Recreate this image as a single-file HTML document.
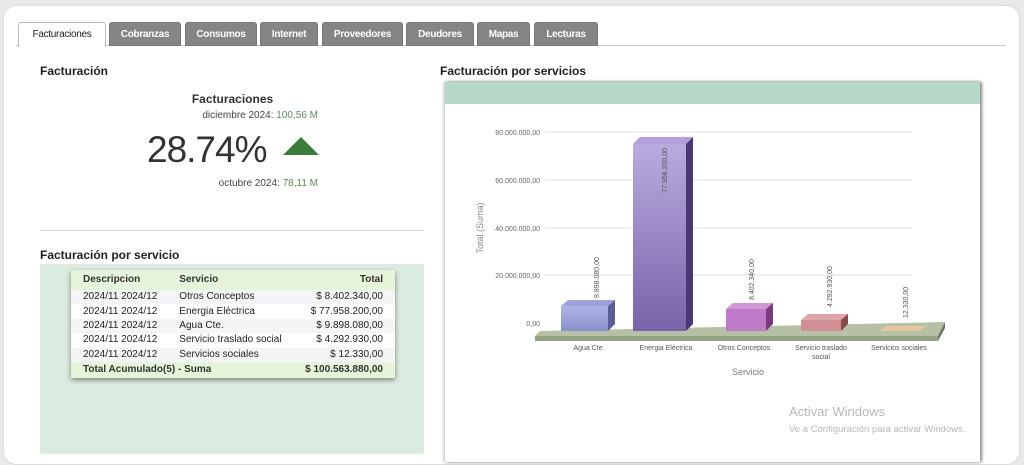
<!DOCTYPE html>
<html><head><meta charset="utf-8"><style>
*{margin:0;padding:0;box-sizing:border-box}
body{width:1024px;height:448px;background:#e9e9e9;font-family:"Liberation Sans",Arial,sans-serif;position:relative;overflow:hidden;color:#222}
.card{position:absolute;left:3px;top:5px;width:1017px;height:460px;background:#fff;border-radius:14px;border:1px solid #ddd}
.tab{position:absolute;top:22px;height:24px;background:#858585;color:#fff;font-size:10px;font-weight:bold;text-align:center;line-height:23px;border-radius:3px 3px 0 0;border:1px solid #777;letter-spacing:-0.3px}
.tab.a{background:#fff;color:#222;border:1px solid #bbb;border-bottom:none;font-weight:normal;height:25px}
.ab{position:absolute}
h3{position:absolute;font-size:12px;font-weight:bold}
table{border-collapse:collapse;font-size:10px;width:100%;white-space:nowrap}
td{height:14.4px;padding:0 0 0 12px;line-height:14px}
td.r{text-align:right;padding:0 12px 0 0}
</style></head><body>
<div class="card"></div>
<div class="ab" style="left:16px;top:45px;width:990px;height:1px;background:#c8c8c8"></div>
<div class="tab a" style="left:18px;width:88px">Facturaciones</div>
<div class="tab" style="left:109px;width:72px">Cobranzas</div>
<div class="tab" style="left:185px;width:72px">Consumos</div>
<div class="tab" style="left:260px;width:58px">Internet</div>
<div class="tab" style="left:322px;width:81px">Proveedores</div>
<div class="tab" style="left:406px;width:68px">Deudores</div>
<div class="tab" style="left:477px;width:53px">Mapas</div>
<div class="tab" style="left:534px;width:64px">Lecturas</div>

<h3 style="left:40px;top:64px">Facturación</h3>
<div class="ab" style="left:150px;top:92px;width:165px;text-align:center;font-size:12px;font-weight:bold;color:#333">Facturaciones</div>
<div class="ab" style="left:150px;top:110px;width:168px;text-align:right;font-size:10px;color:#444">diciembre 2024: <span style="color:#5a8a5a">100,56 M</span></div>
<div class="ab" style="left:147px;top:129px;font-size:37px;color:#333;letter-spacing:-1px">28.74%</div>
<div class="ab" style="left:283px;top:137px;width:0;height:0;border-left:18px solid transparent;border-right:18px solid transparent;border-bottom:18px solid #3a7d3a"></div>
<div class="ab" style="left:150px;top:178px;width:168px;text-align:right;font-size:10px;color:#444">octubre 2024: <span style="color:#5a8a5a">78,11 M</span></div>
<div class="ab" style="left:40px;top:230px;width:384px;height:1px;background:#ddd"></div>

<h3 style="left:40px;top:248px">Facturación por servicio</h3>
<div class="ab" style="left:40px;top:264px;width:384px;height:190px;background:#dcebe0"></div>
<div class="ab" style="left:71px;top:270px;width:324px;background:#fff;box-shadow:0 2px 5px rgba(0,0,0,.45)">
<table>
<tr style="background:#e6f5da;font-weight:bold;color:#333"><td style="height:20px">Descripcion</td><td>Servicio</td><td class="r">Total</td></tr>
<tr style="background:#f5f5f5"><td>2024/11 2024/12</td><td>Otros Conceptos</td><td class="r">$ 8.402.340,00</td></tr>
<tr><td>2024/11 2024/12</td><td>Energia Eléctrica</td><td class="r">$ 77.958.200,00</td></tr>
<tr style="background:#f5f5f5"><td>2024/11 2024/12</td><td>Agua Cte.</td><td class="r">$ 9.898.080,00</td></tr>
<tr><td>2024/11 2024/12</td><td>Servicio traslado social</td><td class="r">$ 4.292.930,00</td></tr>
<tr style="background:#f5f5f5"><td>2024/11 2024/12</td><td>Servicios sociales</td><td class="r">$ 12.330,00</td></tr>
<tr style="background:#e6f5da;font-weight:bold;color:#333"><td colspan="2" style="height:16px">Total Acumulado(5) - Suma</td><td class="r">$ 100.563.880,00</td></tr>
</table></div>

<h3 style="left:440px;top:64px">Facturación por servicios</h3>
<div class="ab" style="left:445px;top:82px;width:535px;height:380px;background:#fff;box-shadow:2px 0 3px #888,-1px 0 3px #bbb"></div>
<div class="ab" style="left:445px;top:82px;width:535px;height:22px;background:#b6d9c7"></div>
<svg class="ab" style="left:0;top:0" width="1024" height="448" font-family="Liberation Sans,sans-serif">
<defs>
<linearGradient id="g1" x1="0" x2="0" y1="0" y2="1"><stop offset="0" stop-color="#b8acdf"/><stop offset="1" stop-color="#7a62a8"/></linearGradient>
<linearGradient id="g0" x1="0" x2="0" y1="0" y2="1"><stop offset="0" stop-color="#aeb3e6"/><stop offset="1" stop-color="#8a8fc9"/></linearGradient>
</defs>
<g stroke="#ddd" stroke-width="1">
<line x1="545" y1="132" x2="912" y2="132"/><line x1="545" y1="180" x2="912" y2="180"/><line x1="545" y1="228" x2="912" y2="228"/><line x1="545" y1="275" x2="912" y2="275"/>
</g>
<g font-size="7" fill="#666" text-anchor="end">
<text x="540" y="135">80.000.000,00</text><text x="540" y="183">60.000.000,00</text><text x="540" y="231">40.000.000,00</text><text x="540" y="278">20.000.000,00</text><text x="540" y="326">0,00</text>
</g>
<text transform="translate(483,228) rotate(-90)" font-size="9" fill="#888" text-anchor="middle">Total (Suma)</text>
<polygon points="540,331 945,322 938,336 535,336" fill="#b5c0a5"/>
<polygon points="535,336 938,336 938,341 535,341" fill="#97a386"/>
<polygon points="938,336 945,322 945,328 938,341" fill="#6c7560"/>
<rect x="561" y="306" width="47" height="25" fill="url(#g0)"/><polygon points="561,306 568,300 615,300 608,306" fill="#9da3da"/><polygon points="608,306 615,300 615,324 608,331" fill="#5a5f95"/>
<rect x="633" y="144" width="53" height="187" fill="url(#g1)"/><polygon points="633,144 640,137 693,137 686,144" fill="#b39fdc"/><polygon points="686,144 693,137 693,324 686,331" fill="#4a3875"/>
<rect x="726" y="309" width="40" height="22" fill="#c07bc8"/><polygon points="726,309 733,303 773,303 766,309" fill="#cf95d4"/><polygon points="766,309 773,303 773,324 766,331" fill="#7a3a80"/>
<rect x="801" y="320" width="40" height="11" fill="#d08f95"/><polygon points="801,320 808,314 848,314 841,320" fill="#dba5aa"/><polygon points="841,320 848,314 848,324 841,331" fill="#8a4a50"/>
<polygon points="880,331 886,326 926,326 920,331" fill="#e8c7a0"/>
<g font-size="7" fill="#555">
<text transform="translate(599,298) rotate(-90)">9.898.080,00</text>
<text transform="translate(667,148) rotate(-90)" text-anchor="end">77.958.200,00</text>
<text transform="translate(754,300) rotate(-90)">8.402.340,00</text>
<text transform="translate(832,307) rotate(-90)">4.292.930,00</text>
<text transform="translate(908,318) rotate(-90)">12.330,00</text>
</g>
<g font-size="7" fill="#555" text-anchor="middle">
<text x="589" y="350">Agua Cte.</text><text x="666" y="350">Energia Eléctrica</text><text x="744" y="350">Otros Conceptos</text><text x="821" y="350">Servicio traslado</text><text x="821" y="359">social</text><text x="899" y="350">Servicios sociales</text>
</g>
<text x="748" y="375" font-size="9" fill="#777" text-anchor="middle">Servicio</text>
<text x="789" y="416" font-size="13" fill="#b8b8b8">Activar Windows</text>
<text x="789" y="432" font-size="9.5" fill="#b8b8b8">Ve a Configuración para activar Windows.</text>
</svg>
</body></html>
